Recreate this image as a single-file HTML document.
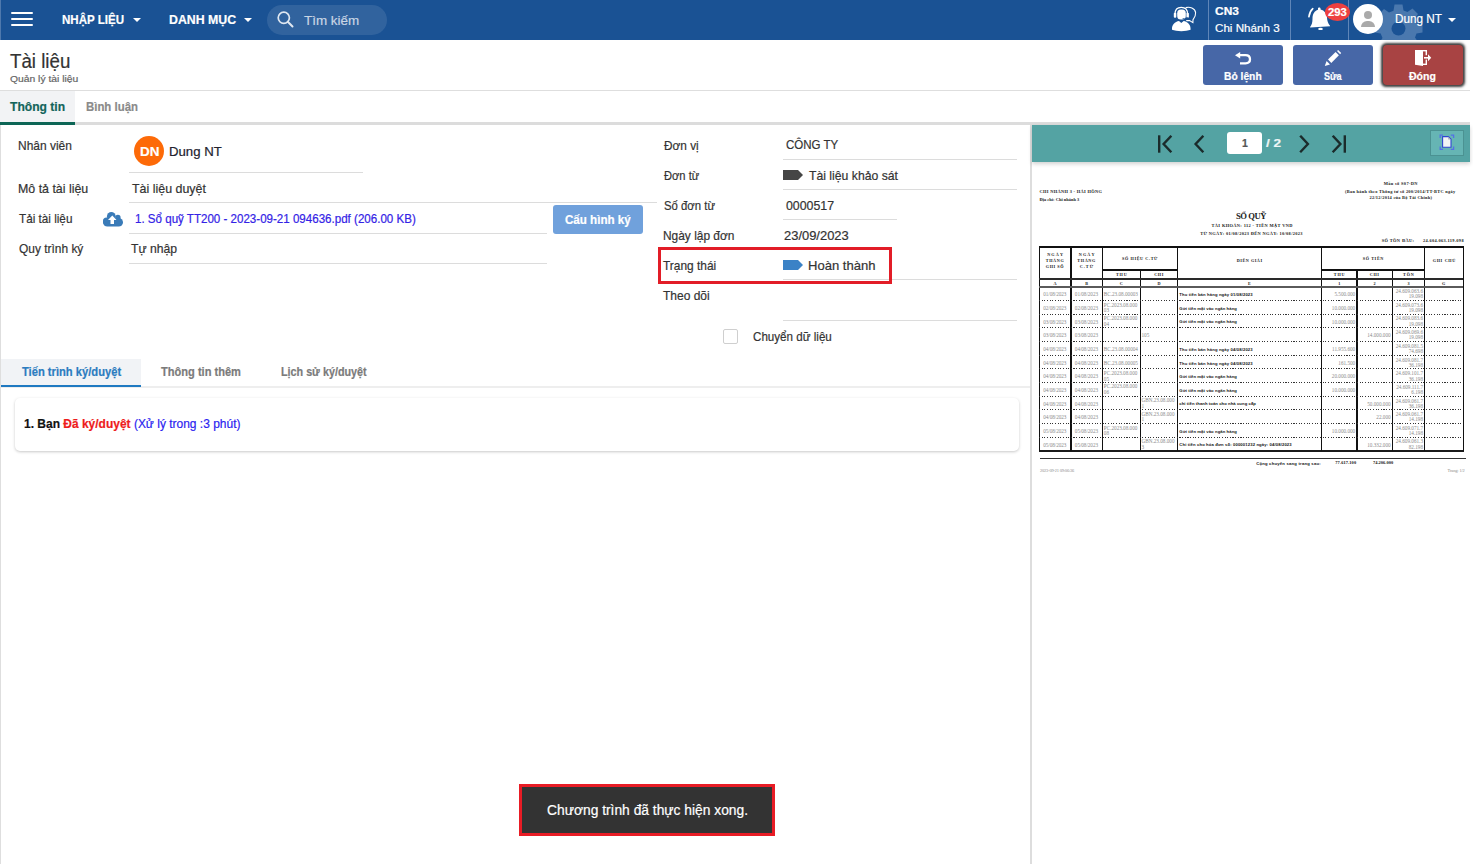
<!DOCTYPE html>
<html lang="vi">
<head>
<meta charset="utf-8">
<style>
*{box-sizing:border-box;margin:0;padding:0}
html,body{width:1473px;height:864px;overflow:hidden;background:#fff;font-family:"Liberation Sans",sans-serif;color:#333}
.a{position:absolute}
.t{position:absolute;line-height:1;white-space:nowrap;-webkit-text-stroke:0.2px currentColor}
#nav{left:0;top:0;width:1470px;height:40px;background:#1a5294}
.bar{position:absolute;left:11px;width:22px;height:2px;border-radius:1px;background:#fff}
.wb{color:#fff;font-weight:bold}
.caret{position:absolute;width:0;height:0;border-left:4px solid transparent;border-right:4px solid transparent;border-top:4px solid #fff}
.ul{position:absolute;height:1px;background:#dcdcdc}
.lbl{font-size:13px;color:#333}
.val{font-size:13px;color:#333}
.btn{position:absolute;top:45px;width:80px;height:40px;border-radius:3px;background:#4767a7}
.p{position:absolute;white-space:nowrap;line-height:1}
</style>
</head>
<body>
<!-- NAVBAR -->
<div id="nav" class="a">
  <div class="bar" style="top:12px"></div>
  <div class="bar" style="top:18px"></div>
  <div class="bar" style="top:24px"></div>
  <div class="t wb" id="t_nhap" style="left:62.00px;top:14.00px;font-size:12.5px;letter-spacing:0px;transform:scaleX(0.9237);transform-origin:0 0">NHẬP LIỆU</div>
  <div class="caret" style="left:133px;top:18px"></div>
  <div class="t wb" id="t_dm" style="left:168.70px;top:14.00px;font-size:12.5px;letter-spacing:0px;transform:scaleX(0.9850);transform-origin:0 0">DANH MỤC</div>
  <div class="caret" style="left:244px;top:18px"></div>
  <div class="a" style="left:267px;top:5px;width:120px;height:30px;border-radius:15px;background:rgba(255,255,255,0.1)"></div>
  <svg class="a" style="left:277px;top:11px" width="17" height="17" viewBox="0 0 17 17"><circle cx="6.8" cy="6.8" r="5.6" fill="none" stroke="#dfe7f1" stroke-width="1.7"/><line x1="10.8" y1="10.8" x2="15.5" y2="15.5" stroke="#dfe7f1" stroke-width="2" stroke-linecap="round"/></svg>
  <div class="t" id="t_tk" style="left:303.60px;top:14.00px;font-size:13.5px;color:#c9d5e4;letter-spacing:0px;transform:scaleX(0.9937);transform-origin:0 0">Tìm kiếm</div>

  <!-- right -->
  <svg class="a" style="left:1168px;top:3px" width="32" height="32" viewBox="0 0 32 32">
    <path d="M17.6 4.6 C21.5 3.4 27.2 5 27.6 9.6 C27.9 13 26.2 15 25 16.6 L24.9 19.6 L21.6 17.6 L18.2 17.6" fill="none" stroke="#fff" stroke-width="1.1"/>
    <path d="M7 11 C7 6.2 9.8 4.3 13.3 4.3 C16.8 4.3 19.6 6.2 19.6 11" fill="none" stroke="#fff" stroke-width="1.2"/>
    <rect x="5.8" y="9.8" width="2.5" height="5" rx="1" fill="#fff"/>
    <rect x="18.4" y="9.8" width="2.5" height="5" rx="1" fill="#fff"/>
    <rect x="9.2" y="6.6" width="8.6" height="10" rx="3.6" fill="#fff"/>
    <path d="M19.6 14.2 C19.2 15.5 17.5 15.8 14.6 15.6" fill="none" stroke="#1a5294" stroke-width="0.8"/>
    <path d="M4 26.8 C3.6 21.6 7 18.6 11 18 L13.3 20 L15.6 18 C19.6 18.6 23 21.6 22.6 26.8 C18 28.6 8.6 28.6 4 26.8 Z" fill="#fff"/>
  </svg>
  <div class="a" style="left:1208px;top:0;width:1px;height:40px;background:#5f86b8"></div>
  <div class="t wb" id="t_cn3" style="left:1214.50px;top:6.00px;font-size:10.8px;letter-spacing:0px;transform:scaleX(1.1068);transform-origin:0 0">CN3</div>
  <div class="t" id="t_cn" style="left:1214.50px;top:23.00px;font-size:11.8px;color:#fff;letter-spacing:0px;transform:scaleX(0.9861);transform-origin:0 0">Chi Nhánh 3</div>
  <div class="a" style="left:1290px;top:0;width:1px;height:40px;background:#5f86b8"></div>
  <svg class="a" style="left:1300px;top:0px" width="32" height="32" viewBox="0 0 32 32">
    <path d="M18 8.4 C18 7.1 20.5 7.1 20.5 8.4 L20.6 9.6 C24.5 10.6 26.7 13.6 27 17.6 C27.2 21 28 23.5 30 25.8 L30.1 26.3 L10.2 27.5 L10.1 27 C11.8 25 12.5 22.6 12.5 18.6 C12.5 14.1 14.5 10.9 18 9.8 Z" fill="#fff"/>
    <ellipse cx="20.5" cy="28.9" rx="2.3" ry="1.2" fill="#fff"/>
    <path d="M8.9 16.8 C9.4 13.5 10.6 10.6 12.8 8.7" fill="none" stroke="#fff" stroke-width="1.6" stroke-linecap="round"/>
  </svg>
    <div class="a" style="left:1348px;top:0;width:1px;height:40px;background:#5f86b8"></div>
  <div class="a" style="left:1325px;top:3px;width:25px;height:18px;border-radius:50%;background:#ee4040"></div>
  <div class="t wb" id="t_293" style="left:1327.90px;top:7.00px;font-size:10.5px;letter-spacing:0px;transform:scaleX(1.0747);transform-origin:0 0">293</div>
  <!-- gear -->
  <svg class="a" style="left:1370px;top:0" width="60" height="40" viewBox="0 0 60 40">
    <g transform="translate(28.5,28.6)" fill="#4a78ae">
      <path d="M-4,-24 L4,-24 L5,-18 L9,-16.5 L14,-20 L19.5,-14.5 L16,-9.5 L17.8,-5 L24,-4 L24,4 L18,5 L16.5,9 L20,14 L14.5,19.5 L9.5,16 L5,17.8 L4,24 L-4,24 L-5,18 L-9,16.5 L-14,20 L-19.5,14.5 L-16,9.5 L-17.8,5 L-24,4 L-24,-4 L-18,-5 L-16.5,-9 L-20,-14 L-14.5,-19.5 L-9.5,-16 L-5,-17.8 Z"/>
      <circle r="7" fill="#1a5294"/>
    </g>
  </svg>
  <div class="a" style="left:1352.5px;top:3.8px;width:30px;height:30px;border-radius:50%;background:#fff;overflow:hidden">
    <div class="a" style="left:11.5px;top:7.5px;width:8px;height:8px;border-radius:50%;background:#aaa"></div>
    <div class="a" style="left:8.5px;top:16.8px;width:14px;height:6.5px;border-radius:7px 7px 0 0;background:#aaa"></div>
  </div>
  <div class="t" id="t_dnt" style="left:1394.66px;top:13.00px;font-size:12.5px;color:#fff;letter-spacing:0px;transform:scaleX(0.9396);transform-origin:0 0">Dung NT</div>
  <div class="caret" style="left:1448px;top:18px"></div>
</div>
<div class="a" style="left:0;top:125px;width:1px;height:739px;background:#dedede"></div>
<div class="a" style="left:0;top:0;width:1px;height:40px;background:#4f79ad"></div>

<!-- HEADER -->
<div class="t" id="t_title" style="left:10.00px;top:52.00px;font-size:19.5px;color:#333;letter-spacing:0px;transform:scaleX(0.9594);transform-origin:0 0">Tài liệu</div>
<div class="t" id="t_sub" style="left:10.20px;top:74.00px;font-size:9.6px;color:#666;letter-spacing:0px;transform:scaleX(1.0756);transform-origin:0 0">Quản lý tài liệu</div>

<div class="btn" style="left:1203px"></div>
<div class="btn" style="left:1293px"></div>
<div class="btn" style="left:1383px;width:80px;border-radius:4px;background:#a84343;box-shadow:0 0 2.5px 1.3px rgba(25,25,25,0.85)"></div>

<div class="ul" style="left:0;top:90px;width:1470px;background:#dedede"></div>
<!-- tabs -->
<div class="a" style="left:0;top:91px;width:75px;height:31px;background:#f2f3f5"></div>
<div class="a" style="left:0;top:122px;width:1470px;height:3px;background:#dcdcdc"></div>
<div class="a" style="left:0;top:122px;width:75px;height:3px;background:#0d6656"></div>
<div class="t" id="t_tt" style="left:10.00px;top:101.00px;font-size:12.8px;font-weight:bold;color:#13645a;letter-spacing:0px;transform:scaleX(0.9443);transform-origin:0 0">Thông tin</div>
<div class="t" id="t_bl" style="left:85.90px;top:101.00px;font-size:12.8px;font-weight:bold;color:#8a8a8a;letter-spacing:0px;transform:scaleX(0.8910);transform-origin:0 0">Bình luận</div>


<!-- action buttons content -->
<svg class="a" style="left:1234px;top:52px" width="18" height="13" viewBox="0 0 18 13">
  <path d="M4.5 3.2 L11.5 3.2 C14.3 3.2 16 5 16 7.3 C16 9.6 14.3 11.3 11.5 11.3 L6 11.3" fill="none" stroke="#fff" stroke-width="2.3"/>
  <path d="M1 3.2 L6.2 0 L6.2 6.4 Z" fill="#fff"/>
</svg>
<div class="t wb" id="t_bo" style="left:1224.20px;top:71.00px;font-size:11.2px;letter-spacing:0px;transform:scaleX(0.9178);transform-origin:0 0">Bỏ lệnh</div>
<svg class="a" style="left:1320px;top:46px" width="26" height="24" viewBox="0 0 26 24">
  <path d="M17 5.1 L18.1 4 L21.2 7.1 L20.1 8.2 Z" fill="#fff"/>
  <path d="M8 13.6 L15.6 6 L18.9 9.3 L11.3 16.9 Z" fill="#fff"/>
  <path d="M6.6 15 L10 18.4 L4.8 20.1 Z" fill="#fff"/>
</svg>
<div class="t wb" id="t_sua" style="left:1323.90px;top:71.00px;font-size:11.2px;letter-spacing:0px;transform:scaleX(0.8111);transform-origin:0 0">Sửa</div>
<svg class="a" style="left:1410px;top:46px" width="26" height="24" viewBox="0 0 26 24">
  <rect x="5" y="4" width="12" height="1.4" fill="#fff"/>
  <rect x="15.6" y="4" width="1.4" height="5.2" fill="#fff"/>
  <rect x="15.6" y="13.6" width="1.4" height="5.4" fill="#fff"/>
  <rect x="13" y="17.6" width="4" height="1.4" fill="#fff"/>
  <path d="M5 4 L11 4 L13 5.3 L13 20 L5 18.8 Z" fill="#fff"/>
  <rect x="14" y="11" width="5" height="1.6" fill="#fff"/>
  <path d="M18 8.3 L21.2 11.8 L18 15.2 Z" fill="#fff"/>
</svg>
<div class="t wb" id="t_dong" style="left:1409.00px;top:71.00px;font-size:11.2px;letter-spacing:0px;transform:scaleX(0.9392);transform-origin:0 0">Đóng</div>

<!-- FORM left -->
<div class="t lbl" id="t_l1" style="left:18.47px;top:140.00px;font-size:12.8px;letter-spacing:0px;transform:scaleX(0.9344);transform-origin:0 0">Nhân viên</div>
<div class="a" style="left:134px;top:136px;width:30px;height:30px;border-radius:50%;background:#fd6a08"></div>
<div class="t wb" id="t_dn" style="left:139.60px;top:145.00px;font-size:13.0px;letter-spacing:0px;transform:scaleX(1.0333);transform-origin:0 0">DN</div>
<div class="t" id="t_dung" style="left:168.77px;top:146.00px;font-size:12.8px;font-weight:normal;color:#22222e;letter-spacing:0px;transform:scaleX(1.0300);transform-origin:0 0">Dung NT</div>
<div class="ul" style="left:129px;top:172px;width:234px"></div>

<div class="t lbl" id="t_l2" style="left:18.43px;top:183.00px;font-size:12.8px;letter-spacing:0px;transform:scaleX(0.9673);transform-origin:0 0">Mô tả tài liệu</div>
<div class="t val" id="t_v2" style="left:131.60px;top:183.00px;font-size:12.8px;letter-spacing:0px;transform:scaleX(0.9705);transform-origin:0 0">Tài liệu duyệt</div>
<div class="ul" style="left:129px;top:202px;width:528px"></div>

<div class="t lbl" id="t_l3" style="left:19.30px;top:213.00px;font-size:12.8px;letter-spacing:0px;transform:scaleX(0.9157);transform-origin:0 0">Tải tài liệu</div>
<svg class="a" style="left:98px;top:206px" width="30" height="26" viewBox="0 0 30 26">
  <g fill="#3a7bb8"><circle cx="13.3" cy="10.4" r="4.4"/><circle cx="19.9" cy="11.4" r="2.7"/><circle cx="8.6" cy="15.2" r="3.6"/><rect x="5" y="12" width="20" height="8.6" rx="4.3"/></g>
  <path d="M14.3 9.6 L18.5 13.9 L16 13.9 L16 17.9 L12.5 17.9 L12.5 13.9 L10 13.9 Z" fill="#fff"/>
</svg>
<div class="t" id="t_link" style="left:134.90px;top:213.00px;font-size:12.2px;color:#3322e6;letter-spacing:0px;transform:scaleX(0.9489);transform-origin:0 0">1. Sổ quỹ TT200 - 2023-09-21 094636.pdf (206.00 KB)</div>
<div class="ul" style="left:129px;top:233px;width:418px"></div>
<div class="a" style="left:553px;top:205px;width:90px;height:28.5px;border-radius:3px;background:#70a1dc"></div>
<div class="t wb" id="t_cau" style="left:565.30px;top:214.00px;font-size:12.3px;letter-spacing:0px;transform:scaleX(0.9420);transform-origin:0 0">Cấu hình ký</div>

<div class="t lbl" id="t_l4" style="left:19.30px;top:243.00px;font-size:12.8px;letter-spacing:0px;transform:scaleX(0.9327);transform-origin:0 0">Quy trình ký</div>
<div class="t val" id="t_v4" style="left:131.30px;top:243.00px;font-size:12.8px;letter-spacing:0px;transform:scaleX(0.9526);transform-origin:0 0">Tự nhập</div>
<div class="ul" style="left:129px;top:263px;width:418px"></div>

<!-- FORM right -->
<div class="t lbl" id="t_r1" style="left:663.60px;top:140.00px;font-size:12.8px;letter-spacing:0px;transform:scaleX(0.9236);transform-origin:0 0">Đơn vị</div>
<div class="t val" id="t_rv1" style="left:785.80px;top:139.00px;font-size:12.8px;letter-spacing:0px;transform:scaleX(0.9002);transform-origin:0 0">CÔNG TY</div>
<div class="ul" style="left:783px;top:159px;width:234px"></div>

<div class="t lbl" id="t_r2" style="left:663.60px;top:170.00px;font-size:12.8px;letter-spacing:0px;transform:scaleX(0.8712);transform-origin:0 0">Đơn từ</div>
<svg class="a" style="left:783px;top:170px" width="20" height="10" viewBox="0 0 20 10"><path d="M0 0 L15 0 L20 5 L15 10 L0 10 Z" fill="#454545"/></svg>
<div class="t val" id="t_rv2" style="left:808.70px;top:170.00px;font-size:12.8px;letter-spacing:0px;transform:scaleX(0.9548);transform-origin:0 0">Tài liệu khảo sát</div>
<div class="ul" style="left:783px;top:189px;width:234px"></div>

<div class="t lbl" id="t_r3" style="left:663.60px;top:200.00px;font-size:12.8px;letter-spacing:0px;transform:scaleX(0.8871);transform-origin:0 0">Số đơn từ</div>
<div class="t val" id="t_rv3" style="left:785.80px;top:200.00px;font-size:12.8px;letter-spacing:0px;transform:scaleX(0.9658);transform-origin:0 0">0000517</div>
<div class="ul" style="left:783px;top:219px;width:114px"></div>

<div class="t lbl" id="t_r4" style="left:662.67px;top:230.00px;font-size:12.8px;letter-spacing:0px;transform:scaleX(0.9316);transform-origin:0 0">Ngày lập đơn</div>
<div class="t val" id="t_rv4" style="left:783.60px;top:230.00px;font-size:12.8px;letter-spacing:0px;transform:scaleX(1.0105);transform-origin:0 0">23/09/2023</div>

<div class="t lbl" id="t_r5" style="left:663.40px;top:260.00px;font-size:12.8px;letter-spacing:0px;transform:scaleX(0.9307);transform-origin:0 0">Trạng thái</div>
<svg class="a" style="left:783px;top:260px" width="20" height="10" viewBox="0 0 20 10"><path d="M0 0 L15 0 L20 5 L15 10 L0 10 Z" fill="#3b82c6"/></svg>
<div class="t val" id="t_rv5" style="left:807.68px;top:260.00px;font-size:12.8px;letter-spacing:0px;transform:scaleX(1.0191);transform-origin:0 0">Hoàn thành</div>
<div class="ul" style="left:783px;top:279px;width:234px"></div>
<div class="a" style="left:658px;top:247px;width:234px;height:37px;border:3px solid #e21d27"></div>

<div class="t lbl" id="t_r6" style="left:663.40px;top:290.00px;font-size:12.8px;letter-spacing:0px;transform:scaleX(0.9376);transform-origin:0 0">Theo dõi</div>
<div class="ul" style="left:783px;top:320px;width:234px"></div>

<div class="a" style="left:723px;top:329px;width:15px;height:15px;border:1px solid #cfcfcf;border-radius:2px;background:#fff"></div>
<div class="t val" id="t_chk" style="left:753.20px;top:331.00px;font-size:12.8px;letter-spacing:0px;transform:scaleX(0.9077);transform-origin:0 0">Chuyển dữ liệu</div>

<!-- lower tabs -->
<div class="a" style="left:1px;top:359px;width:140px;height:26px;background:#f1f3f6"></div>
<div class="a" style="left:1px;top:386px;width:1029px;height:2px;background:#eeeeee"></div>
<div class="a" style="left:1px;top:385px;width:140px;height:2px;background:#1f79c1"></div>
<div class="t" id="t_tab1" style="left:21.70px;top:366.00px;font-size:12.0px;font-weight:bold;color:#2c7cc0;letter-spacing:0px;transform:scaleX(0.9308);transform-origin:0 0">Tiến trình ký/duyệt</div>
<div class="t" id="t_tab2" style="left:161.00px;top:366.00px;font-size:12.0px;font-weight:bold;color:#7b7b7b;letter-spacing:0px;transform:scaleX(0.9223);transform-origin:0 0">Thông tin thêm</div>
<div class="t" id="t_tab3" style="left:281.00px;top:366.00px;font-size:12.0px;font-weight:bold;color:#7b7b7b;letter-spacing:0px;transform:scaleX(0.8974);transform-origin:0 0">Lịch sử ký/duyệt</div>

<div class="a" style="left:15px;top:398px;width:1004px;height:53px;border-radius:5px;background:#fff;box-shadow:0 1px 3px rgba(0,0,0,0.22)"></div>
<div class="t" id="t_card" style="left:23.60px;top:418.00px;font-size:12.8px;color:#2b1ef0;letter-spacing:0px;transform:scaleX(0.9363);transform-origin:0 0"><b style="color:#111">1. Bạn </b><b style="color:#ee1c1c">Đã ký/duyệt</b> (Xử lý trong :3 phút)</div>

<!-- vertical divider -->
<div class="a" style="left:1030px;top:125px;width:2px;height:739px;background:#dddddd"></div>

<!-- PDF viewer -->
<div class="a" style="left:1032px;top:125px;width:438px;height:37px;background:#54a3a3;box-shadow:0 2px 4px rgba(0,0,0,0.18)"></div>
<svg class="a" style="left:1155px;top:133px" width="195" height="22" viewBox="0 0 195 22">
  <g fill="none" stroke="#1b2b2b" stroke-width="2.4" stroke-linecap="square">
    <path d="M4.2 3.5 L4.2 18.5"/>
    <path d="M15.5 3.6 L8.6 11 L15.5 18.4"/>
    <path d="M47.5 3.6 L40.6 11 L47.5 18.4"/>
    <path d="M146 3.6 L152.9 11 L146 18.4"/>
    <path d="M178.5 3.6 L185.4 11 L178.5 18.4"/>
    <path d="M189.8 3.5 L189.8 18.5"/>
  </g>
</svg>
<div class="a" style="left:1227px;top:132px;width:35px;height:22px;border-radius:3px;background:#fff"></div>
<div class="t" id="t_pg" style="left:1242.00px;top:138.00px;font-size:10.5px;font-weight:bold;color:#555;letter-spacing:0px;transform:scaleX(1.0000);transform-origin:0 0">1</div>
<div class="t" id="t_pg2" style="left:1266.00px;top:138.00px;font-size:11.0px;font-weight:bold;color:#eef5f5;letter-spacing:0px;transform:scaleX(1.2384);transform-origin:0 0">/ 2</div>
<div class="a" style="left:1430px;top:130px;width:34px;height:26px;background:#66b5b4;border:1px solid #4b9292"></div>
<svg class="a" style="left:1439px;top:134px" width="16" height="17" viewBox="0 0 16 17">
  <path d="M3.6 2.6 L9.4 2.6 L12 5.2 L12 13.2 L3.6 13.2 Z" fill="#f2f4f4" stroke="#2f45d0" stroke-width="1.1" stroke-linejoin="round"/>
  <path d="M9.2 2.8 L9.2 5.4 L11.8 5.4 Z" fill="#aab"/>
  <g fill="none" stroke="#5470e6" stroke-width="1.3"><path d="M1.2 4 L1.2 1.2 L4 1.2"/><path d="M11.8 1.2 L14.6 1.2 L14.6 4"/><path d="M1.2 12.6 L1.2 15.4 L4 15.4"/><path d="M11.8 15.4 L14.6 15.4 L14.6 12.6"/></g>
</svg>
<div id="pdfwrap">
<div class="a" style="left:1038.8px;top:246.1px;width:425.6px;height:1.7px;background:#111;"></div>
<div class="a" style="left:1038.8px;top:450.2px;width:425.6px;height:2.0px;background:#1a1a1a;"></div>
<div class="a" style="left:1038.7px;top:246.7px;width:1.2px;height:204.8px;background:#111;"></div>
<div class="a" style="left:1070.0px;top:246.7px;width:1.5px;height:204.8px;background:#111;"></div>
<div class="a" style="left:1101.8px;top:246.7px;width:1.5px;height:204.8px;background:#111;"></div>
<div class="a" style="left:1139.5px;top:269.6px;width:1.5px;height:181.9px;background:#111;"></div>
<div class="a" style="left:1176.8px;top:246.7px;width:1.5px;height:204.8px;background:#111;"></div>
<div class="a" style="left:1320.8px;top:246.7px;width:1.5px;height:204.8px;background:#111;"></div>
<div class="a" style="left:1356.0px;top:269.6px;width:1.5px;height:181.9px;background:#111;"></div>
<div class="a" style="left:1391.5px;top:269.6px;width:1.5px;height:181.9px;background:#111;"></div>
<div class="a" style="left:1423.8px;top:246.7px;width:1.5px;height:204.8px;background:#111;"></div>
<div class="a" style="left:1462.8px;top:246.7px;width:1.2px;height:204.8px;background:#111;"></div>
<div class="a" style="left:1102.5px;top:269.0px;width:75.1px;height:1.5px;background:#111;"></div>
<div class="a" style="left:1321.5px;top:269.0px;width:103.1px;height:1.5px;background:#111;"></div>
<div class="a" style="left:1039.3px;top:277.9px;width:424.1px;height:1.7px;background:#2a2a2a;"></div>
<div class="a" style="left:1039.3px;top:285.9px;width:424.1px;height:1.8px;background:#5a5a5a;"></div>
<div class="a" style="left:1039.3px;top:300.1px;width:424.1px;height:1.0px;background:transparent;background-image:repeating-linear-gradient(90deg,#333 0 1.1px,transparent 1.1px 2.65px)"></div>
<div class="a" style="left:1039.3px;top:313.6px;width:424.1px;height:1.0px;background:transparent;background-image:repeating-linear-gradient(90deg,#333 0 1.1px,transparent 1.1px 2.65px)"></div>
<div class="a" style="left:1039.3px;top:327.3px;width:424.1px;height:1.0px;background:transparent;background-image:repeating-linear-gradient(90deg,#333 0 1.1px,transparent 1.1px 2.65px)"></div>
<div class="a" style="left:1039.3px;top:340.8px;width:424.1px;height:1.0px;background:transparent;background-image:repeating-linear-gradient(90deg,#333 0 1.1px,transparent 1.1px 2.65px)"></div>
<div class="a" style="left:1039.3px;top:355.0px;width:424.1px;height:1.0px;background:transparent;background-image:repeating-linear-gradient(90deg,#333 0 1.1px,transparent 1.1px 2.65px)"></div>
<div class="a" style="left:1039.3px;top:368.4px;width:424.1px;height:1.0px;background:transparent;background-image:repeating-linear-gradient(90deg,#333 0 1.1px,transparent 1.1px 2.65px)"></div>
<div class="a" style="left:1039.3px;top:381.7px;width:424.1px;height:1.0px;background:transparent;background-image:repeating-linear-gradient(90deg,#333 0 1.1px,transparent 1.1px 2.65px)"></div>
<div class="a" style="left:1039.3px;top:395.9px;width:424.1px;height:1.0px;background:transparent;background-image:repeating-linear-gradient(90deg,#333 0 1.1px,transparent 1.1px 2.65px)"></div>
<div class="a" style="left:1039.3px;top:409.2px;width:424.1px;height:1.0px;background:transparent;background-image:repeating-linear-gradient(90deg,#333 0 1.1px,transparent 1.1px 2.65px)"></div>
<div class="a" style="left:1039.3px;top:423.1px;width:424.1px;height:1.0px;background:transparent;background-image:repeating-linear-gradient(90deg,#333 0 1.1px,transparent 1.1px 2.65px)"></div>
<div class="a" style="left:1039.3px;top:436.6px;width:424.1px;height:1.0px;background:transparent;background-image:repeating-linear-gradient(90deg,#333 0 1.1px,transparent 1.1px 2.65px)"></div>
<div class="a" style="left:1039.5px;top:457.8px;width:426.0px;height:1.1px;background:#333;"></div>
<div class="p" style="left:1039.50px;top:190.05px;font-size:4.4px;color:#1a1a1a;font-family:'Liberation Serif',serif;font-weight:bold;letter-spacing:0.330px;">CHI NHÁNH 3 - HẢI HỒNG</div>
<div class="p" style="left:1039.50px;top:198.15px;font-size:4.4px;color:#1a1a1a;font-family:'Liberation Serif',serif;font-weight:bold;letter-spacing:0.040px;">Địa chỉ: Chi nhánh 3</div>
<div class="p" style="left:1383.70px;top:182.05px;font-size:4.4px;color:#1a1a1a;font-family:'Liberation Serif',serif;font-weight:bold;letter-spacing:0.355px;">Mẫu số S07-DN</div>
<div class="p" style="left:1345.00px;top:190.35px;font-size:4.4px;color:#1a1a1a;font-family:'Liberation Serif',serif;font-weight:bold;letter-spacing:0.281px;">(Ban hành theo Thông tư số 200/2014/TT-BTC ngày</div>
<div class="p" style="left:1369.50px;top:196.05px;font-size:4.4px;color:#1a1a1a;font-family:'Liberation Serif',serif;font-weight:bold;letter-spacing:0.253px;">22/12/2014 của Bộ Tài Chính)</div>
<div class="p" style="left:1235.90px;top:211.60px;font-size:8.6px;color:#1a1a1a;font-family:'Liberation Serif',serif;font-weight:bold;letter-spacing:-0.421px;">SỔ QUỸ</div>
<div class="p" style="left:1211.50px;top:223.95px;font-size:4.4px;color:#1a1a1a;font-family:'Liberation Serif',serif;font-weight:bold;letter-spacing:0.373px;">TÀI KHOẢN: 112 - TIỀN MẶT VND</div>
<div class="p" style="left:1200.30px;top:231.75px;font-size:4.4px;color:#1a1a1a;font-family:'Liberation Serif',serif;font-weight:bold;letter-spacing:0.334px;">TỪ NGÀY: 01/08/2023 ĐẾN NGÀY: 10/08/2023</div>
<div class="p" style="left:1381.70px;top:238.95px;font-size:4.4px;color:#1a1a1a;font-family:'Liberation Serif',serif;font-weight:bold;letter-spacing:0.392px;">SỐ TỒN ĐẦU:</div>
<div class="p" style="left:1423.00px;top:238.95px;font-size:4.4px;color:#1a1a1a;font-family:'Liberation Serif',serif;font-weight:bold;letter-spacing:0.336px;">24.604.063.119.098</div>
<div class="p" style="left:1047.15px;top:252.85px;font-size:4.2px;color:#1a1a1a;font-family:'Liberation Serif',serif;font-weight:bold;letter-spacing:1.165px;">NGÀY</div>
<div class="p" style="left:1045.70px;top:258.95px;font-size:4.2px;color:#1a1a1a;font-family:'Liberation Serif',serif;font-weight:bold;letter-spacing:0.650px;">THÁNG</div>
<div class="p" style="left:1045.80px;top:264.95px;font-size:4.2px;color:#1a1a1a;font-family:'Liberation Serif',serif;font-weight:bold;letter-spacing:0.596px;">GHI SỔ</div>
<div class="p" style="left:1078.75px;top:252.85px;font-size:4.2px;color:#1a1a1a;font-family:'Liberation Serif',serif;font-weight:bold;letter-spacing:1.165px;">NGÀY</div>
<div class="p" style="left:1077.30px;top:258.95px;font-size:4.2px;color:#1a1a1a;font-family:'Liberation Serif',serif;font-weight:bold;letter-spacing:0.650px;">THÁNG</div>
<div class="p" style="left:1079.65px;top:264.95px;font-size:4.2px;color:#1a1a1a;font-family:'Liberation Serif',serif;font-weight:bold;letter-spacing:1.045px;">C.TỪ</div>
<div class="p" style="left:1122.05px;top:257.15px;font-size:4.2px;color:#1a1a1a;font-family:'Liberation Serif',serif;font-weight:bold;letter-spacing:0.614px;">SỐ HIỆU C.TỪ</div>
<div class="p" style="left:1115.95px;top:273.25px;font-size:4.2px;color:#1a1a1a;font-family:'Liberation Serif',serif;font-weight:bold;letter-spacing:0.875px;">THU</div>
<div class="p" style="left:1154.15px;top:273.25px;font-size:4.2px;color:#1a1a1a;font-family:'Liberation Serif',serif;font-weight:bold;letter-spacing:0.609px;">CHI</div>
<div class="p" style="left:1236.65px;top:258.95px;font-size:4.2px;color:#1a1a1a;font-family:'Liberation Serif',serif;font-weight:bold;letter-spacing:0.546px;">DIỄN GIẢI</div>
<div class="p" style="left:1362.70px;top:257.15px;font-size:4.2px;color:#1a1a1a;font-family:'Liberation Serif',serif;font-weight:bold;letter-spacing:0.642px;">SỐ TIỀN</div>
<div class="p" style="left:1333.75px;top:273.25px;font-size:4.2px;color:#1a1a1a;font-family:'Liberation Serif',serif;font-weight:bold;letter-spacing:0.875px;">THU</div>
<div class="p" style="left:1369.75px;top:273.25px;font-size:4.2px;color:#1a1a1a;font-family:'Liberation Serif',serif;font-weight:bold;letter-spacing:0.609px;">CHI</div>
<div class="p" style="left:1403.00px;top:273.25px;font-size:4.2px;color:#1a1a1a;font-family:'Liberation Serif',serif;font-weight:bold;letter-spacing:0.875px;">TỒN</div>
<div class="p" style="left:1432.70px;top:258.95px;font-size:4.2px;color:#1a1a1a;font-family:'Liberation Serif',serif;font-weight:bold;letter-spacing:0.688px;">GHI CHÚ</div>
<div class="p" style="left:1053.55px;top:282.25px;font-size:4.2px;color:#1a1a1a;font-family:'Liberation Serif',serif;font-weight:bold;">A</div>
<div class="p" style="left:1085.15px;top:282.25px;font-size:4.2px;color:#1a1a1a;font-family:'Liberation Serif',serif;font-weight:bold;">B</div>
<div class="p" style="left:1119.85px;top:282.25px;font-size:4.2px;color:#1a1a1a;font-family:'Liberation Serif',serif;font-weight:bold;">C</div>
<div class="p" style="left:1157.40px;top:282.25px;font-size:4.2px;color:#1a1a1a;font-family:'Liberation Serif',serif;font-weight:bold;">D</div>
<div class="p" style="left:1248.05px;top:282.25px;font-size:4.2px;color:#1a1a1a;font-family:'Liberation Serif',serif;font-weight:bold;">E</div>
<div class="p" style="left:1338.15px;top:282.25px;font-size:4.2px;color:#1a1a1a;font-family:'Liberation Serif',serif;font-weight:bold;">1</div>
<div class="p" style="left:1373.50px;top:282.25px;font-size:4.2px;color:#1a1a1a;font-family:'Liberation Serif',serif;font-weight:bold;">2</div>
<div class="p" style="left:1407.40px;top:282.25px;font-size:4.2px;color:#1a1a1a;font-family:'Liberation Serif',serif;font-weight:bold;">3</div>
<div class="p" style="left:1442.00px;top:282.25px;font-size:4.2px;color:#1a1a1a;font-family:'Liberation Serif',serif;font-weight:bold;">G</div>
<div class="p" style="left:1043.25px;top:292.25px;font-size:5.2px;color:#8a8a8a;font-family:'Liberation Serif',serif;letter-spacing:-0.049px;">01/08/2023</div>
<div class="p" style="left:1074.85px;top:292.25px;font-size:5.2px;color:#8a8a8a;font-family:'Liberation Serif',serif;letter-spacing:-0.049px;">01/08/2023</div>
<div class="p" style="left:1103.80px;top:292.25px;font-size:5.2px;color:#8a8a8a;font-family:'Liberation Serif',serif;">BC.23.08.00003</div>
<div class="p" style="left:1179.30px;top:293.05px;font-size:4.2px;color:#111;font-family:'Liberation Sans',sans-serif;font-weight:bold;letter-spacing:0.132px;">Thu tiền bán hàng ngày 01/08/2023</div>
<div class="p" style="left:1334.44px;top:292.25px;font-size:5.2px;color:#8a8a8a;font-family:'Liberation Serif',serif;">5.500.000</div>
<div class="p" style="left:1395.76px;top:289.05px;font-size:5.2px;color:#8a8a8a;font-family:'Liberation Serif',serif;">24.609.063.6</div>
<div class="p" style="left:1408.73px;top:294.35px;font-size:5.2px;color:#8a8a8a;font-family:'Liberation Serif',serif;">19.098</div>
<div class="p" style="left:1043.25px;top:305.95px;font-size:5.2px;color:#8a8a8a;font-family:'Liberation Serif',serif;letter-spacing:-0.049px;">02/08/2023</div>
<div class="p" style="left:1074.85px;top:305.95px;font-size:5.2px;color:#8a8a8a;font-family:'Liberation Serif',serif;letter-spacing:-0.049px;">02/08/2023</div>
<div class="p" style="left:1103.80px;top:302.65px;font-size:5.2px;color:#8a8a8a;font-family:'Liberation Serif',serif;">PC.2023.08.000</div>
<div class="p" style="left:1103.80px;top:308.35px;font-size:5.2px;color:#8a8a8a;font-family:'Liberation Serif',serif;">03</div>
<div class="p" style="left:1179.30px;top:306.75px;font-size:4.2px;color:#111;font-family:'Liberation Sans',sans-serif;font-weight:bold;letter-spacing:0.087px;">Gửi tiền mặt vào ngân hàng</div>
<div class="p" style="left:1331.85px;top:305.95px;font-size:5.2px;color:#8a8a8a;font-family:'Liberation Serif',serif;">10.000.000</div>
<div class="p" style="left:1395.76px;top:302.95px;font-size:5.2px;color:#8a8a8a;font-family:'Liberation Serif',serif;">24.609.073.6</div>
<div class="p" style="left:1408.73px;top:308.25px;font-size:5.2px;color:#8a8a8a;font-family:'Liberation Serif',serif;">19.098</div>
<div class="p" style="left:1043.25px;top:319.55px;font-size:5.2px;color:#8a8a8a;font-family:'Liberation Serif',serif;letter-spacing:-0.049px;">03/08/2023</div>
<div class="p" style="left:1074.85px;top:319.55px;font-size:5.2px;color:#8a8a8a;font-family:'Liberation Serif',serif;letter-spacing:-0.049px;">03/08/2023</div>
<div class="p" style="left:1103.80px;top:316.15px;font-size:5.2px;color:#8a8a8a;font-family:'Liberation Serif',serif;">PC.2023.08.000</div>
<div class="p" style="left:1103.80px;top:321.85px;font-size:5.2px;color:#8a8a8a;font-family:'Liberation Serif',serif;">04</div>
<div class="p" style="left:1179.30px;top:320.35px;font-size:4.2px;color:#111;font-family:'Liberation Sans',sans-serif;font-weight:bold;letter-spacing:0.087px;">Gửi tiền mặt vào ngân hàng</div>
<div class="p" style="left:1331.85px;top:319.55px;font-size:5.2px;color:#8a8a8a;font-family:'Liberation Serif',serif;">10.000.000</div>
<div class="p" style="left:1395.76px;top:316.45px;font-size:5.2px;color:#8a8a8a;font-family:'Liberation Serif',serif;">24.609.083.6</div>
<div class="p" style="left:1408.73px;top:321.75px;font-size:5.2px;color:#8a8a8a;font-family:'Liberation Serif',serif;">19.098</div>
<div class="p" style="left:1043.25px;top:333.15px;font-size:5.2px;color:#8a8a8a;font-family:'Liberation Serif',serif;letter-spacing:-0.049px;">03/08/2023</div>
<div class="p" style="left:1074.85px;top:333.15px;font-size:5.2px;color:#8a8a8a;font-family:'Liberation Serif',serif;letter-spacing:-0.049px;">03/08/2023</div>
<div class="p" style="left:1141.50px;top:333.15px;font-size:5.2px;color:#8a8a8a;font-family:'Liberation Serif',serif;">105</div>
<div class="p" style="left:1367.25px;top:333.15px;font-size:5.2px;color:#8a8a8a;font-family:'Liberation Serif',serif;">14.000.000</div>
<div class="p" style="left:1395.76px;top:330.15px;font-size:5.2px;color:#8a8a8a;font-family:'Liberation Serif',serif;">24.609.069.6</div>
<div class="p" style="left:1408.73px;top:335.45px;font-size:5.2px;color:#8a8a8a;font-family:'Liberation Serif',serif;">19.098</div>
<div class="p" style="left:1043.25px;top:347.00px;font-size:5.2px;color:#8a8a8a;font-family:'Liberation Serif',serif;letter-spacing:-0.049px;">04/08/2023</div>
<div class="p" style="left:1074.85px;top:347.00px;font-size:5.2px;color:#8a8a8a;font-family:'Liberation Serif',serif;letter-spacing:-0.049px;">04/08/2023</div>
<div class="p" style="left:1103.80px;top:347.00px;font-size:5.2px;color:#8a8a8a;font-family:'Liberation Serif',serif;">BC.23.08.00004</div>
<div class="p" style="left:1179.30px;top:347.80px;font-size:4.2px;color:#111;font-family:'Liberation Sans',sans-serif;font-weight:bold;letter-spacing:0.132px;">Thu tiền bán hàng ngày 04/08/2023</div>
<div class="p" style="left:1332.04px;top:347.00px;font-size:5.2px;color:#8a8a8a;font-family:'Liberation Serif',serif;">11.955.600</div>
<div class="p" style="left:1395.76px;top:343.65px;font-size:5.2px;color:#8a8a8a;font-family:'Liberation Serif',serif;">24.609.081.5</div>
<div class="p" style="left:1408.73px;top:348.95px;font-size:5.2px;color:#8a8a8a;font-family:'Liberation Serif',serif;">74.698</div>
<div class="p" style="left:1043.25px;top:360.80px;font-size:5.2px;color:#8a8a8a;font-family:'Liberation Serif',serif;letter-spacing:-0.049px;">04/08/2023</div>
<div class="p" style="left:1074.85px;top:360.80px;font-size:5.2px;color:#8a8a8a;font-family:'Liberation Serif',serif;letter-spacing:-0.049px;">04/08/2023</div>
<div class="p" style="left:1103.80px;top:360.80px;font-size:5.2px;color:#8a8a8a;font-family:'Liberation Serif',serif;">BC.23.08.00005</div>
<div class="p" style="left:1179.30px;top:361.60px;font-size:4.2px;color:#111;font-family:'Liberation Sans',sans-serif;font-weight:bold;letter-spacing:0.132px;">Thu tiền bán hàng ngày 04/08/2023</div>
<div class="p" style="left:1338.33px;top:360.80px;font-size:5.2px;color:#8a8a8a;font-family:'Liberation Serif',serif;">161.500</div>
<div class="p" style="left:1395.76px;top:357.85px;font-size:5.2px;color:#8a8a8a;font-family:'Liberation Serif',serif;">24.609.081.7</div>
<div class="p" style="left:1408.73px;top:363.15px;font-size:5.2px;color:#8a8a8a;font-family:'Liberation Serif',serif;">36.198</div>
<div class="p" style="left:1043.25px;top:374.15px;font-size:5.2px;color:#8a8a8a;font-family:'Liberation Serif',serif;letter-spacing:-0.049px;">04/08/2023</div>
<div class="p" style="left:1074.85px;top:374.15px;font-size:5.2px;color:#8a8a8a;font-family:'Liberation Serif',serif;letter-spacing:-0.049px;">04/08/2023</div>
<div class="p" style="left:1103.80px;top:370.95px;font-size:5.2px;color:#8a8a8a;font-family:'Liberation Serif',serif;">PC.2023.08.000</div>
<div class="p" style="left:1103.80px;top:376.65px;font-size:5.2px;color:#8a8a8a;font-family:'Liberation Serif',serif;">05</div>
<div class="p" style="left:1179.30px;top:374.95px;font-size:4.2px;color:#111;font-family:'Liberation Sans',sans-serif;font-weight:bold;letter-spacing:0.087px;">Gửi tiền mặt vào ngân hàng</div>
<div class="p" style="left:1331.85px;top:374.15px;font-size:5.2px;color:#8a8a8a;font-family:'Liberation Serif',serif;">20.000.000</div>
<div class="p" style="left:1395.76px;top:371.25px;font-size:5.2px;color:#8a8a8a;font-family:'Liberation Serif',serif;">24.609.101.7</div>
<div class="p" style="left:1408.73px;top:376.55px;font-size:5.2px;color:#8a8a8a;font-family:'Liberation Serif',serif;">36.198</div>
<div class="p" style="left:1043.25px;top:387.90px;font-size:5.2px;color:#8a8a8a;font-family:'Liberation Serif',serif;letter-spacing:-0.049px;">04/08/2023</div>
<div class="p" style="left:1074.85px;top:387.90px;font-size:5.2px;color:#8a8a8a;font-family:'Liberation Serif',serif;letter-spacing:-0.049px;">04/08/2023</div>
<div class="p" style="left:1103.80px;top:384.25px;font-size:5.2px;color:#8a8a8a;font-family:'Liberation Serif',serif;">PC.2023.08.000</div>
<div class="p" style="left:1103.80px;top:389.95px;font-size:5.2px;color:#8a8a8a;font-family:'Liberation Serif',serif;">06</div>
<div class="p" style="left:1179.30px;top:388.70px;font-size:4.2px;color:#111;font-family:'Liberation Sans',sans-serif;font-weight:bold;letter-spacing:0.087px;">Gửi tiền mặt vào ngân hàng</div>
<div class="p" style="left:1331.85px;top:387.90px;font-size:5.2px;color:#8a8a8a;font-family:'Liberation Serif',serif;">10.000.000</div>
<div class="p" style="left:1396.15px;top:384.55px;font-size:5.2px;color:#8a8a8a;font-family:'Liberation Serif',serif;">24.609.111.7</div>
<div class="p" style="left:1411.32px;top:389.85px;font-size:5.2px;color:#8a8a8a;font-family:'Liberation Serif',serif;">6.198</div>
<div class="p" style="left:1043.25px;top:401.65px;font-size:5.2px;color:#8a8a8a;font-family:'Liberation Serif',serif;letter-spacing:-0.049px;">04/08/2023</div>
<div class="p" style="left:1074.85px;top:401.65px;font-size:5.2px;color:#8a8a8a;font-family:'Liberation Serif',serif;letter-spacing:-0.049px;">04/08/2023</div>
<div class="p" style="left:1141.50px;top:398.45px;font-size:5.2px;color:#8a8a8a;font-family:'Liberation Serif',serif;">GBN.23.08.000</div>
<div class="p" style="left:1141.50px;top:404.15px;font-size:5.2px;color:#8a8a8a;font-family:'Liberation Serif',serif;">1</div>
<div class="p" style="left:1179.30px;top:402.45px;font-size:4.2px;color:#111;font-family:'Liberation Sans',sans-serif;font-weight:bold;letter-spacing:0.074px;">chi tiền thanh toán cho nhà cung cấp</div>
<div class="p" style="left:1367.25px;top:401.65px;font-size:5.2px;color:#8a8a8a;font-family:'Liberation Serif',serif;">50.000.000</div>
<div class="p" style="left:1395.76px;top:398.75px;font-size:5.2px;color:#8a8a8a;font-family:'Liberation Serif',serif;">24.609.061.7</div>
<div class="p" style="left:1408.73px;top:404.05px;font-size:5.2px;color:#8a8a8a;font-family:'Liberation Serif',serif;">36.198</div>
<div class="p" style="left:1043.25px;top:415.25px;font-size:5.2px;color:#8a8a8a;font-family:'Liberation Serif',serif;letter-spacing:-0.049px;">04/08/2023</div>
<div class="p" style="left:1074.85px;top:415.25px;font-size:5.2px;color:#8a8a8a;font-family:'Liberation Serif',serif;letter-spacing:-0.049px;">04/08/2023</div>
<div class="p" style="left:1141.50px;top:411.75px;font-size:5.2px;color:#8a8a8a;font-family:'Liberation Serif',serif;">GBN.23.08.000</div>
<div class="p" style="left:1141.50px;top:417.45px;font-size:5.2px;color:#8a8a8a;font-family:'Liberation Serif',serif;">1</div>
<div class="p" style="left:1376.33px;top:415.25px;font-size:5.2px;color:#8a8a8a;font-family:'Liberation Serif',serif;">22.000</div>
<div class="p" style="left:1395.76px;top:412.05px;font-size:5.2px;color:#8a8a8a;font-family:'Liberation Serif',serif;">24.609.061.7</div>
<div class="p" style="left:1408.73px;top:417.35px;font-size:5.2px;color:#8a8a8a;font-family:'Liberation Serif',serif;">14.198</div>
<div class="p" style="left:1043.25px;top:428.95px;font-size:5.2px;color:#8a8a8a;font-family:'Liberation Serif',serif;letter-spacing:-0.049px;">05/08/2023</div>
<div class="p" style="left:1074.85px;top:428.95px;font-size:5.2px;color:#8a8a8a;font-family:'Liberation Serif',serif;letter-spacing:-0.049px;">05/08/2023</div>
<div class="p" style="left:1103.80px;top:425.65px;font-size:5.2px;color:#8a8a8a;font-family:'Liberation Serif',serif;">PC.2023.08.000</div>
<div class="p" style="left:1103.80px;top:431.35px;font-size:5.2px;color:#8a8a8a;font-family:'Liberation Serif',serif;">08</div>
<div class="p" style="left:1179.30px;top:429.75px;font-size:4.2px;color:#111;font-family:'Liberation Sans',sans-serif;font-weight:bold;letter-spacing:0.087px;">Gửi tiền mặt vào ngân hàng</div>
<div class="p" style="left:1331.85px;top:428.95px;font-size:5.2px;color:#8a8a8a;font-family:'Liberation Serif',serif;">10.000.000</div>
<div class="p" style="left:1395.76px;top:425.95px;font-size:5.2px;color:#8a8a8a;font-family:'Liberation Serif',serif;">24.609.071.7</div>
<div class="p" style="left:1408.73px;top:431.25px;font-size:5.2px;color:#8a8a8a;font-family:'Liberation Serif',serif;">14.198</div>
<div class="p" style="left:1043.25px;top:442.65px;font-size:5.2px;color:#8a8a8a;font-family:'Liberation Serif',serif;letter-spacing:-0.049px;">05/08/2023</div>
<div class="p" style="left:1074.85px;top:442.65px;font-size:5.2px;color:#8a8a8a;font-family:'Liberation Serif',serif;letter-spacing:-0.049px;">05/08/2023</div>
<div class="p" style="left:1141.50px;top:439.15px;font-size:5.2px;color:#8a8a8a;font-family:'Liberation Serif',serif;">GBN.23.08.000</div>
<div class="p" style="left:1141.50px;top:444.85px;font-size:5.2px;color:#8a8a8a;font-family:'Liberation Serif',serif;">3</div>
<div class="p" style="left:1179.30px;top:443.45px;font-size:4.2px;color:#111;font-family:'Liberation Sans',sans-serif;font-weight:bold;letter-spacing:0.130px;">Chi tiền cho hóa đơn số: 000001232 ngày: 04/08/2023</div>
<div class="p" style="left:1367.25px;top:442.65px;font-size:5.2px;color:#8a8a8a;font-family:'Liberation Serif',serif;">10.332.000</div>
<div class="p" style="left:1395.76px;top:439.45px;font-size:5.2px;color:#8a8a8a;font-family:'Liberation Serif',serif;">24.609.061.3</div>
<div class="p" style="left:1408.73px;top:444.75px;font-size:5.2px;color:#8a8a8a;font-family:'Liberation Serif',serif;">82.198</div>
<div class="p" style="left:1256.20px;top:461.65px;font-size:4.2px;color:#111;font-family:'Liberation Sans',sans-serif;font-weight:bold;letter-spacing:0.213px;">Cộng chuyển sang trang sau:</div>
<div class="p" style="left:1335.30px;top:460.85px;font-size:4.4px;color:#111;font-family:'Liberation Serif',serif;font-weight:bold;letter-spacing:0.115px;">77.617.100</div>
<div class="p" style="left:1372.90px;top:460.85px;font-size:4.4px;color:#111;font-family:'Liberation Serif',serif;font-weight:bold;letter-spacing:0.049px;">74.206.000</div>
<div class="p" style="left:1040.00px;top:468.75px;font-size:4.4px;color:#8a8a8a;font-family:'Liberation Serif',serif;letter-spacing:-0.167px;">2023-09-21 09:06:36</div>
<div class="p" style="left:1447.60px;top:468.85px;font-size:4.4px;color:#8a8a8a;font-family:'Liberation Serif',serif;letter-spacing:-0.118px;">Trang: 1/2</div>
</div>

<!-- toast -->
<div class="a" style="left:519px;top:784px;width:256px;height:52px;background:#333;border:3px solid #e81c25"></div>
<div class="t" id="t_toast" style="left:546.50px;top:803.00px;font-size:14.0px;color:#fff;letter-spacing:0px;transform:scaleX(0.9865);transform-origin:0 0">Chương trình đã thực hiện xong.</div>

</body>
</html>
